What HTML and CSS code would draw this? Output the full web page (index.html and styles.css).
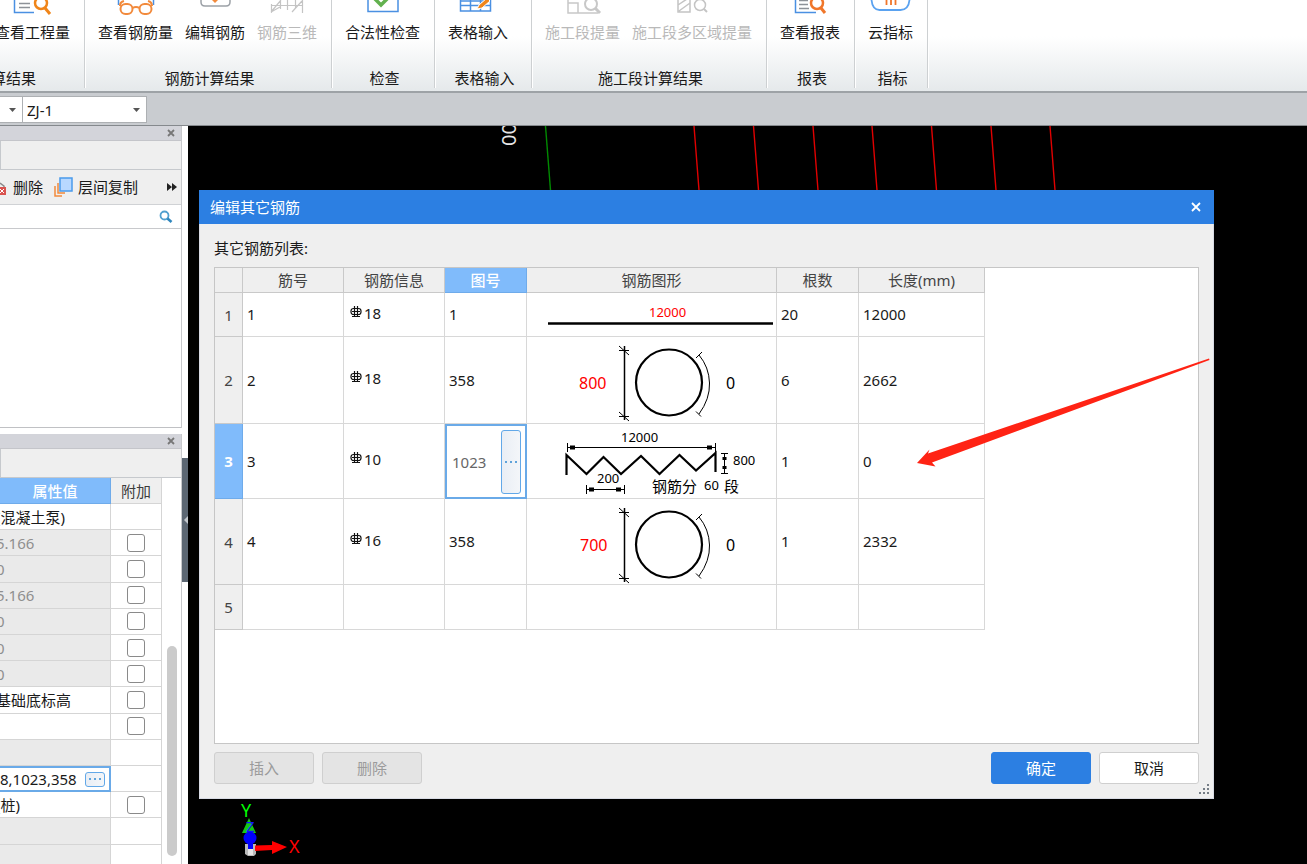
FILE: index.html
```html
<!DOCTYPE html>
<html lang="zh-CN">
<head>
<meta charset="utf-8">
<title>编辑其它钢筋</title>
<link rel="stylesheet" href="styles.css">
</head>
<body>
<div class="app">
  <header class="ribbon">
    <section class="group group-first">
      <div class="tools">
        <button class="tool" type="button">
          <svg width="40" height="16" viewBox="12 0 40 16" fill="none"><path d="M14.500 0V12.500H34" stroke="#4a90e2" stroke-width="1.500"/><path d="M19 3.500h11M19 7.500h11" stroke="#8d9298" stroke-width="1.500"/><circle cx="41" cy="3" r="6" stroke="#f08519" stroke-width="2.500"/><path d="M45 8l5 6" stroke="#f08519" stroke-width="3"/></svg>
          <span>查看工程量</span>
        </button>
      </div>
      <h2 class="group-name">土建计算结果</h2>
    </section>
    <section class="group">
      <div class="tools">
        <button class="tool" type="button">
          <svg width="40" height="16" viewBox="116 0 40 16" fill="none"><path d="M118.500 0v5M153.500 0v5" stroke="#4a90e2" stroke-width="1.500"/><g stroke="#f28a3c" stroke-width="2"><rect x="120.500" y="4" width="12" height="10" rx="5"/><rect x="139.500" y="4" width="12" height="10" rx="5"/><path d="M132.500 8q3.500-2 7 0M120 6q0-4 4-5M152 6q0-4-4-5"/></g></svg>
          <span>查看钢筋量</span>
        </button>
        <button class="tool" type="button">
          <svg width="40" height="16" viewBox="193 0 40 16" fill="none"><path d="M199 0v2q0 4 4 4h21q4 0 4-4V0" stroke="#9ca1a7" stroke-width="1.500"/><path d="M210 0h6l-3 3z" fill="#f28a3c"/></svg>
          <span>编辑钢筋</span>
        </button>
        <button class="tool" type="button" disabled>
          <svg width="40" height="16" viewBox="267 0 40 16" fill="none" stroke="#c4c4c4" stroke-width="1.200"><path d="M271.500 13V4M280.500 9V0M295.500 9V0M302.500 13V0M271 5.500h31M271 12l10-12M292 12l10-11M280 7l-9 5M287.500 0v10"/></svg>
          <span>钢筋三维</span>
        </button>
      </div>
      <h2 class="group-name">钢筋计算结果</h2>
    </section>
    <section class="group">
      <div class="tools">
        <button class="tool" type="button">
          <svg width="40" height="16" viewBox="363 0 40 16" fill="none"><path d="M368 0v11.500h30V0" stroke="#4a90e2" stroke-width="1.500"/><path d="M374 -2l7 7 8-8" stroke="#62b14e" stroke-width="3.500"/></svg>
          <span>合法性检查</span>
        </button>
      </div>
      <h2 class="group-name">检查</h2>
    </section>
    <section class="group group-table">
      <div class="tools">
        <button class="tool" type="button">
          <svg width="40" height="16" viewBox="458 0 40 16" fill="none"><path d="M460.500 0v11h30V0M460 5.500h30M470.500 0v11M480.500 0v11M460 1h30" stroke="#4a90e2" stroke-width="1.500"/><path d="M487-2l3 3-8 7-5 1 2-4z" fill="#f08519" stroke="#fff"/></svg>
          <span>表格输入</span>
        </button>
      </div>
      <h2 class="group-name">表格输入</h2>
    </section>
    <section class="group">
      <div class="tools">
        <button class="tool" type="button" disabled>
          <svg width="40" height="16" viewBox="562 0 40 16" fill="none" stroke="#c8c8c8" stroke-width="1.500"><path d="M567 0v13h30M567 3h10v10"/><circle cx="590" cy="4" r="6" stroke-width="2"/><path d="M594 8l5 5" stroke-width="3"/></svg>
          <span>施工段提量</span>
        </button>
        <button class="tool" type="button" disabled>
          <svg width="40" height="16" viewBox="672 0 40 16" fill="none" stroke="#c4c4c4" stroke-width="1.500"><path d="M678 0v12h12V0M678 5l9-6M679 11l11-8"/><circle cx="700" cy="5" r="5.500"/><path d="M704 9l3 3" stroke-width="2"/></svg>
          <span>施工段多区域提量</span>
        </button>
      </div>
      <h2 class="group-name">施工段计算结果</h2>
    </section>
    <section class="group">
      <div class="tools">
        <button class="tool" type="button">
          <svg width="40" height="16" viewBox="790 0 40 16" fill="none"><path d="M795.500 0v12.500H816" stroke="#4a90e2" stroke-width="1.500"/><path d="M799 0.500h9M799 4.500h9M799 8.500h10" stroke="#8d9298" stroke-width="1.500"/><circle cx="817" cy="3" r="6" stroke="#f0762a" stroke-width="2.500"/><path d="M821 8l4 5" stroke="#f0762a" stroke-width="3"/></svg>
          <span>查看报表</span>
        </button>
      </div>
      <h2 class="group-name">报表</h2>
    </section>
    <section class="group">
      <div class="tools">
        <button class="tool" type="button">
          <svg width="42" height="16" viewBox="869 0 42 16" fill="none"><path d="M870.500 0q1 10 8 10h21q8 0 9-10" stroke="#5aa2f0" stroke-width="1.800"/><path d="M885.500 0v5M890 0v5M894.500 0v5" stroke="#f0762a" stroke-width="1.800"/></svg>
          <span>云指标</span>
        </button>
      </div>
      <h2 class="group-name">指标</h2>
    </section>
  </header>

  <div class="selector-bar">
    <label class="combo combo-type">
      <select aria-label="类型"><option></option></select>
      <svg width="7" height="4" viewBox="0 0 7 4"><path d="M0 0h7L3.500 4z" fill="#555"/></svg>
    </label>
    <label class="combo combo-part">
      <select aria-label="构件"><option>ZJ-1</option></select>
      <svg width="7" height="4" viewBox="0 0 7 4"><path d="M0 0h7L3.500 4z" fill="#555"/></svg>
    </label>
  </div>

  <main class="workspace">
    <aside class="sidebar">
      <section class="panel panel-list">
        <div class="panel-title"><button class="panel-close" type="button" aria-label="关闭"><svg width="8" height="8" viewBox="0 0 8 8"><path d="M1 1l6 6M7 1L1 7" stroke="#777" stroke-width="1.800"/></svg></button></div>
        <div class="tabs"></div>
        <div class="panel-tools">
          <button class="mini" type="button">
            <svg width="8" height="18" viewBox="0 0 8 18" fill="none"><path d="M0 5l4 3v2" stroke="#888" stroke-width="1.500"/><rect x="-4" y="9" width="10" height="8" fill="#d9534f"/><path d="M0 11l4 4M4 11l-4 4" stroke="#fff"/></svg>
            删除
          </button>
          <button class="mini" type="button">
            <svg width="19" height="20" viewBox="0 0 19 20" fill="none"><path d="M1 9v10h7M4 6v10h7" stroke="#f28a3c" stroke-width="1.500"/><rect x="6" y="1" width="12" height="13" fill="#b8d8ff" stroke="#4a9bec" stroke-width="1.500"/></svg>
            层间复制
          </button>
          <button class="more" type="button" aria-label="更多"><svg width="10" height="8" viewBox="0 0 10 8"><path d="M0 0l5 4-5 4zM5 0l5 4-5 4z" fill="#222"/></svg></button>
        </div>
        <div class="search">
          <input type="text" aria-label="搜索">
          <svg width="14" height="14" viewBox="0 0 14 14" fill="none"><circle cx="5.500" cy="5.500" r="4" stroke="#4f9fcf" stroke-width="1.800"/><path d="M8.500 8.500l4 3.500" stroke="#2f86bd" stroke-width="2.600"/></svg>
        </div>
        <div class="part-list"></div>
      </section>

      <section class="panel panel-props">
        <div class="panel-title"><button class="panel-close" type="button" aria-label="关闭"><svg width="8" height="8" viewBox="0 0 8 8"><path d="M1 1l6 6M7 1L1 7" stroke="#777" stroke-width="1.800"/></svg></button></div>
        <div class="tabs"></div>
        <div class="props-body">
          <table class="props">
            <thead><tr><th class="value-head">属性值</th><th>附加</th></tr></thead>
            <tbody>
              <tr><td><span>(混凝土泵)</span></td><td></td></tr>
              <tr class="locked"><td><span>5.166</span></td><td><input type="checkbox" aria-label="附加"></td></tr>
              <tr class="locked"><td><span>0</span></td><td><input type="checkbox" aria-label="附加"></td></tr>
              <tr class="locked"><td><span>5.166</span></td><td><input type="checkbox" aria-label="附加"></td></tr>
              <tr class="locked"><td><span>0</span></td><td><input type="checkbox" aria-label="附加"></td></tr>
              <tr class="locked"><td><span>0</span></td><td><input type="checkbox" aria-label="附加"></td></tr>
              <tr class="locked"><td><span>0</span></td><td><input type="checkbox" aria-label="附加"></td></tr>
              <tr><td><span>基础底标高</span></td><td><input type="checkbox" aria-label="附加"></td></tr>
              <tr><td></td><td><input type="checkbox" aria-label="附加"></td></tr>
              <tr class="locked"><td></td><td></td></tr>
              <tr class="editing"><td><div class="edit-cell"><input type="text" aria-label="其它钢筋" value="8,1023,358"><button class="dots" type="button" aria-label="编辑"><i></i><i></i><i></i></button></div></td><td></td></tr>
              <tr><td><span>(桩)</span></td><td><input type="checkbox" aria-label="附加"></td></tr>
              <tr class="locked"><td></td><td></td></tr>
              <tr class="locked"><td></td><td></td></tr>
            </tbody>
          </table>
          <div class="scroll"><div class="thumb"></div></div>
        </div>
      </section>
      <button class="collapse" type="button" aria-label="折叠"><svg width="4" height="8" viewBox="0 0 4 8"><path d="M4 0v8L0 4z" fill="#c3c8cd"/></svg></button>
    </aside>

    <div class="canvas">
      <svg class="grid-lines" width="620" height="64" viewBox="488 126 620 64" fill="none">
        <path d="M545.500 126l5 64" stroke="#008a00" stroke-width="1.400"/>
        <path d="M694 126l5 64M753.500 126l5 64M813 126l5 64M872 126l5 64M931.500 126l5 64M991 126l5 64M1050 126l5 64" stroke="#e00000" stroke-width="1.400"/>
        <text transform="translate(502 123) rotate(90)" class="mark">00</text>
      </svg>
      <svg class="axes" width="66" height="60" viewBox="238 800 66 60">
        <path d="M249 818l7 15h-14z" fill="#14c814"/>
        <text x="241" y="817" class="ax ax-y">Y</text>
        <text x="246" y="832" class="ax ax-z">Z</text>
        <path d="M245 844l0 10 3 2h6l2-2v-10z" fill="#b9b9b9"/>
        <path d="M248 846v9h5v-9z" fill="#e6e6e6"/>
        <circle cx="250" cy="838" r="6.500" fill="#00f"/>
        <path d="M248 838h5v11h-5z" fill="#00f"/>
        <path d="M255 845.500l17-.5v-4l15 6-15 7v-4l-17 1z" fill="#f00"/>
        <text x="289" y="853" class="ax ax-x">X</text>
      </svg>

      <section class="dialog" role="dialog" aria-labelledby="dlg-title">
        <div class="dialog-title">
          <h1 id="dlg-title">编辑其它钢筋</h1>
          <button class="dialog-close" type="button" aria-label="关闭"><svg width="10" height="10" viewBox="0 0 10 10"><path d="M1 1l8 8M9 1L1 9" stroke="#fff" stroke-width="1.800"/></svg></button>
        </div>
        <div class="dialog-body">
          <p class="list-label" id="list-label">其它钢筋列表:</p>
          <div class="list-box">
            <table class="rebar" aria-labelledby="list-label">
              <colgroup><col class="c-no"><col class="c-id"><col class="c-info"><col class="c-fig"><col class="c-shape"><col class="c-count"><col class="c-len"></colgroup>
              <thead>
                <tr><th></th><th>筋号</th><th>钢筋信息</th><th class="active">图号</th><th>钢筋图形</th><th>根数</th><th>长度(mm)</th></tr>
              </thead>
              <tbody>
                <tr class="short">
                  <th>1</th><td>1</td>
                  <td class="info"><svg class="bar-sign" width="12" height="13" viewBox="0 0 12 13"><use href="#grade"/></svg>18</td>
                  <td>1</td>
                  <td class="shape"><svg width="249" height="43" viewBox="527 293 249 43"><path d="M548 323.500h225" stroke="#000" stroke-width="2.500"/><text x="649" y="317" class="dim red">12000</text></svg></td>
                  <td>20</td><td>12000</td>
                </tr>
                <tr class="tall first-tall">
                  <th>2</th><td>2</td>
                  <td class="info"><svg class="bar-sign" width="12" height="13" viewBox="0 0 12 13"><use href="#grade"/></svg>18</td>
                  <td>358</td>
                  <td class="shape"><svg width="249" height="84" viewBox="527 338 249 84"><use href="#ring"/><text x="579" y="389" class="dim-big red">800</text><text x="726" y="389" class="dim-big">0</text></svg></td>
                  <td>6</td><td>2662</td>
                </tr>
                <tr class="current">
                  <th>3</th><td>3</td>
                  <td class="info"><svg class="bar-sign" width="12" height="13" viewBox="0 0 12 13"><use href="#grade"/></svg>10</td>
                  <td class="picker"><div class="edit-cell"><input type="text" aria-label="图号" value="1023"><button class="dots" type="button" aria-label="选择图号"><i></i><i></i><i></i></button></div></td>
                  <td class="shape"><svg width="249" height="74" viewBox="527 424 249 74" fill="none" stroke="#000">
                    <path d="M566.500 475V455L586.500 474 603.500 457 621 474 641 456 659.500 474 679.500 455 696 470.500 715.500 453V472" stroke-width="2.200"/>
                    <path d="M567.500 443v9M715.500 443v10M568 447.500h147M586.500 485v9M624.500 485v9M587 489.500h37M721 453.500h7M721 473.500h7M724.500 454v19"/>
                    <path d="M570 445.500h5v4h-5zM707 445.500h5v4h-5zM589 487.500h5v4h-5zM616 487.500h5v4h-5zM722.500 457h4v3h-4zM722.500 466h4v3h-4z" fill="#000" stroke="none"/>
                    <g stroke="none" fill="#000">
                      <text x="621" y="442" class="dim">12000</text><text x="597" y="483" class="dim">200</text><text x="733" y="465" class="dim">800</text>
                      <text x="652" y="492" class="note">钢筋分</text><text x="704" y="490" class="dim">60</text><text x="724" y="492" class="note">段</text>
                    </g></svg></td>
                  <td>1</td><td>0</td>
                </tr>
                <tr class="tall">
                  <th>4</th><td>4</td>
                  <td class="info"><svg class="bar-sign" width="12" height="13" viewBox="0 0 12 13"><use href="#grade"/></svg>16</td>
                  <td>358</td>
                  <td class="shape"><svg width="249" height="84" viewBox="527 338 249 84"><use href="#ring"/><text x="580" y="389" class="dim-big red">700</text><text x="726" y="389" class="dim-big">0</text></svg></td>
                  <td>1</td><td>2332</td>
                </tr>
                <tr class="blank"><th>5</th><td></td><td></td><td></td><td></td><td></td><td></td></tr>
              </tbody>
            </table>
          </div>
          <div class="actions">
            <button class="btn" type="button" disabled>插入</button>
            <button class="btn" type="button" disabled>删除</button>
            <span class="spacer"></span>
            <button class="btn primary" type="button">确定</button>
            <button class="btn" type="button">取消</button>
          </div>
        </div>
        <svg class="grip" width="11" height="11" viewBox="0 0 11 11"><path d="M8 0h2v2H8zM8 4h2v2H8zM4 4h2v2H4zM8 8h2v2H8zM4 8h2v2H4zM0 8h2v2H0z" fill="#757d86"/></svg>
        <svg class="pointer" width="296" height="112" viewBox="916 357 296 112"><path d="M917 463l12.500-13.500-1.500 4L1209 358.500l.5 1.500L932 462.500l3.500 4z" fill="#ff2314"/></svg>
      </section>
    </div>
  </main>
</div>

<svg class="defs" width="0" height="0" aria-hidden="true">
  <defs>
    <g id="grade" fill="none" stroke="#111">
      <rect x="1" y="2.500" width="10" height="6" rx="2.500" stroke-width="1.200"/>
      <path d="M4.500 0v11M7.500 0v11M2 5.500h8M2 10.500h8" stroke-width="1.200"/>
    </g>
    <g id="ring" fill="none" stroke="#000">
      <circle cx="669" cy="382.500" r="33" stroke-width="2.200"/>
      <path d="M624.500 346v74" stroke-width="1.500"/>
      <path d="M619 350.500h10M619 346l10 9M619 416.500h10M619 412l10 9M696 358l6-6M696 411.500l5 5M699 355q10 12 10.500 28T699 414"/>
    </g>
  </defs>
</svg>
</body>
</html>
```

FILE: styles.css
```css
* { box-sizing: border-box; }

body {
  margin: 0;
  background: #000;
  color: #1a1a1a;
  font: 15px/20px "Noto Sans", "Noto Sans CJK SC", sans-serif;
}

button, input, select { font: inherit; color: inherit; margin: 0; }
button { padding: 0; border: 0; background: none; }
h1, h2, p { margin: 0; font-size: 15px; font-weight: 400; }
svg { display: block; flex: none; }

.app {
  display: flex;
  flex-direction: column;
  height: 100vh;
  overflow: hidden;
}

/* Ribbon */
.ribbon {
  display: flex;
  flex: none;
  padding-bottom: 3px;
  border-bottom: 2px solid #9da2a6;
  background: linear-gradient(#fff 40%, #e5e9eb);
}

.group {
  display: flex;
  flex-direction: column;
  gap: 26px;
  padding: 0 14px 0 13px;
  border-right: 1px solid #cdd0d2;
  box-shadow: 1px 0 #fff;
}

.group-first { width: 85px; align-items: flex-end; }
.group-first .group-name { padding-right: 34px; }
.group-table { min-width: 97px; }

.tools { display: flex; gap: 12px; }

.tool {
  display: flex;
  flex-direction: column;
  align-items: center;
  gap: 6px;
  white-space: nowrap;
}

.tool:disabled { color: #b9b9b9; }
.group-name { padding-left: 4px; text-align: center; white-space: nowrap; }

/* Component selectors */
.selector-bar {
  display: flex;
  flex: none;
  padding: 3px 0 2px;
  border-bottom: 1px solid #85898d;
  background: #c9ccd0;
}

.combo {
  display: flex;
  align-items: center;
  height: 27px;
  padding-right: 6px;
  border: 1px solid #adb0b3;
  background: #fff;
}

.combo select {
  flex: 1;
  min-width: 0;
  height: 22px;
  padding: 0 4px;
  border: 0;
  appearance: none;
  background: none;
}

.combo-type { width: 23px; border-left: 0; }
.combo-part { width: 124px; border-left: 0; }

/* Workspace */
.workspace { display: flex; flex: 1; min-height: 0; }

.sidebar {
  position: relative;
  display: flex;
  flex: none;
  flex-direction: column;
  gap: 6px;
  width: 188px;
  padding-right: 6px;
  overflow: hidden;
  background: #fff;
}

.panel {
  display: flex;
  flex-direction: column;
  border-right: 1px solid #c8c9cc;
}

.panel-list { flex: none; }
.panel-props { flex: 1; min-height: 0; }

.panel-title {
  display: flex;
  flex: none;
  align-items: center;
  justify-content: flex-end;
  height: 15px;
  padding-right: 6px;
  border-bottom: 1px solid #c4c5ca;
  background: #d3d4da;
}

.tabs {
  flex: none;
  height: 29px;
  border: solid #c6c9cd;
  border-width: 0 0 1px 1px;
  background: #efefef;
}

.panel-tools {
  display: flex;
  align-items: center;
  gap: 11px;
  height: 35px;
  padding-right: 4px;
  border-bottom: 1px solid #d0d2d5;
  background: #efefef;
}

.mini { display: flex; align-items: center; gap: 5px; white-space: nowrap; }
.more { margin-left: auto; }

.search {
  display: flex;
  align-items: center;
  height: 24px;
  padding-right: 8px;
  border-bottom: 1px solid #c8c9cc;
}

.search input {
  flex: 1;
  min-width: 0;
  height: 20px;
  border: 0;
  outline: 0;
}

.part-list { height: 199px; border-bottom: 1px solid #c0c1c4; }

.props-body { display: flex; flex: 1; min-height: 0; overflow: hidden; }

.props {
  flex: none;
  width: 162px;
  height: 393px;
  border-spacing: 0;
  table-layout: fixed;
}

.props th, .props td {
  height: 26px;
  padding: 0;
  border: solid #d5d5d5;
  border-width: 0 1px 1px 0;
  white-space: nowrap;
}

.props th {
  width: 51px;
  background: #efefef;
  color: #3c3c3c;
  font-weight: 400;
}

.props .value-head {
  width: 111px;
  border-color: #6fabea;
  background: #80bbfb;
  color: #fff;
  font-weight: 500;
}

.props td span { margin-left: -4px; }
.props td:last-child { text-align: center; }
.props .locked td:first-child { background: #eaeaea; color: #8f8f8f; }

.props input[type="checkbox"] {
  display: block;
  width: 18px;
  height: 18px;
  margin: 0 auto;
  border: 1px solid #8a8a8a;
  border-radius: 3px;
  appearance: none;
  background: #fff;
}

.props .editing td:first-child {
  border: 2px solid #6aaae8;
  border-left: 0;
}

.edit-cell { display: flex; align-items: center; }

.edit-cell input {
  flex: 1;
  min-width: 0;
  padding: 0;
  border: 0;
  outline: 0;
  background: none;
}

.dots {
  display: flex;
  flex: none;
  align-items: center;
  justify-content: center;
  gap: 3px;
  border: 1px solid #62a8e8;
  border-radius: 3px;
  background: linear-gradient(90deg, #e9eef5, #f4f6f9);
}

.dots i { width: 2px; height: 2px; background: #5fa3da; }
.props .dots { width: 20px; height: 15px; margin-right: 4px; }
.props .edit-cell { height: 22px; }

.scroll { flex: 1; padding: 168px 4px 9px 5px; }
.thumb { height: 210px; border-radius: 5px; background: #cbcbcb; }

.collapse {
  position: absolute;
  top: 332px;
  right: 0;
  display: flex;
  align-items: center;
  justify-content: flex-end;
  width: 6px;
  height: 124px;
  background: #5c6773;
}

/* Model canvas */
.canvas {
  position: relative;
  flex: 1;
  min-width: 0;
  overflow: hidden;
  background: #000;
}

.grid-lines { position: absolute; top: 0; left: 300px; }
.axes { position: absolute; top: 674px; left: 50px; }
.mark { fill: #e6e6e6; font-size: 20px; }
.ax { font-size: 18px; }
.ax-x { fill: #f00; }
.ax-y { fill: #0f0; }
.ax-z { fill: #1414ff; font-size: 15px; }

/* Dialog */
.dialog {
  position: absolute;
  top: 64px;
  left: 11px;
  right: 93px;
  border: 1px solid #d8dbe4;
  border-top: 0;
  background: #efefef;
}

.dialog-title {
  display: flex;
  align-items: center;
  justify-content: space-between;
  height: 34px;
  margin: 0 -1px;
  padding: 0 13px 0 11px;
  background: #2c7fe2;
  color: #fff;
}

.dialog-body {
  display: flex;
  flex-direction: column;
  padding: 14px;
}

.list-label { margin-bottom: 9px; }

.list-box {
  min-height: 477px;
  border: 1px solid #c6c6c6;
  background: #fff;
}

.rebar {
  width: 770px;
  border-spacing: 0;
  table-layout: fixed;
}

.c-no { width: 28px; }
.c-id, .c-info { width: 101px; }
.c-fig, .c-count { width: 82px; }
.c-shape { width: 250px; }
.c-len { width: 126px; }

.rebar th, .rebar td {
  padding: 0 4px 1px;
  border: solid #d8d8d8;
  border-width: 0 1px 1px 0;
  text-align: left;
}

.rebar th {
  padding: 0;
  border-color: #c9c9c9;
  background: #efefef;
  color: #444;
  font-weight: 400;
  text-align: center;
}

.rebar thead th { height: 25px; }
.rebar thead .active { border-color: #6fabea; background: #80bbfb; color: #fff; font-weight: 500; }
.rebar .short { height: 44px; }
.rebar .tall { height: 86px; }
.rebar .first-tall { height: 87px; }
.rebar .current { height: 75px; }
.rebar .blank { height: 45px; }
.rebar .current th { border-color: #6fabea; background: #80bbfb; color: #fff; font-weight: 700; }
.rebar td.shape { padding: 0; }
.rebar td.info { padding: 0 6px 4px; }

.bar-sign { display: inline-block; margin-right: 2px; }

.rebar td.picker { padding: 0; border: 2px solid #6aaae8; }
.picker .edit-cell { height: 71px; padding: 0 4px 0 5px; color: #666; }
.picker .dots { width: 20px; height: 64px; }

.dim { font-size: 13px; }
.dim-big { font-size: 16px; }
.note { font-size: 15px; }
.red { fill: #f00; }

.actions { display: flex; gap: 8px; padding-top: 8px; }
.spacer { flex: 1; }

.btn {
  width: 100px;
  height: 32px;
  border: 1px solid #cfcfcf;
  border-radius: 3px;
  background: #fff;
}

.btn:disabled { background: #e4e4e4; color: #9b9b9b; }
.btn.primary { border-color: #2c7fe2; background: #2c7fe2; color: #fff; }

.grip { position: absolute; right: 3px; bottom: 3px; }
.pointer { position: absolute; top: 167px; right: 1px; }

.defs { position: absolute; }
```
